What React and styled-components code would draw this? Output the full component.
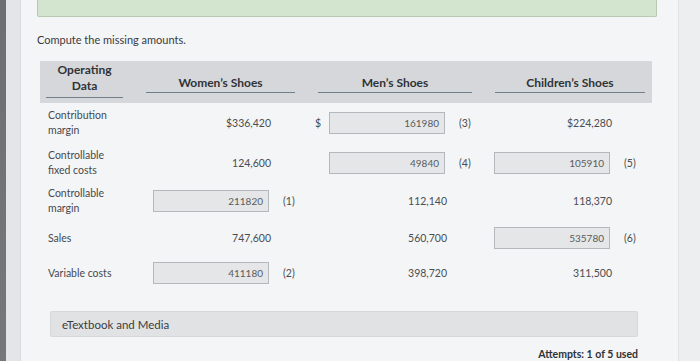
import React from "react";
import styled, { createGlobalStyle } from "styled-components";

const Global = createGlobalStyle`
  html, body { margin: 0; padding: 0; background: #eceef0; }
  body { font-family: Lato, "Open Sans", "Liberation Sans", sans-serif; }
`;

const Screen = styled.div`
  width: 700px;
  height: 361px;
  display: flex;
  overflow: hidden;
  background: #eceef0;
`;

const Bezel = styled.div`
  width: 6px;
  flex: none;
  background: linear-gradient(#6c6e72, #75777b);
`;

const Gutter = styled.div`
  width: 14px;
  flex: none;
  background: #e3e5e7;
  border-right: 1px solid #d9dbde;
`;

const Panel = styled.div`
  width: 658px;
  flex: none;
  background: #f4f5f6;
  padding-left: 16px;
  box-sizing: border-box;
  display: flex;
  flex-direction: column;
  border-right: 1px solid #dfe1e3;
`;

const Banner = styled.div`
  width: 618px;
  height: 16px;
  flex: none;
  background: #d3e5cf;
  border: 1px solid #b7c9b3;
  border-top: none;
  border-radius: 0 0 2px 2px;
`;

const Prompt = styled.p`
  margin: 16px 0 0 0;
  font-size: 11px;
  line-height: 14px;
  color: #383b3e;
`;

const Table = styled.div`
  margin: 14px 0 0 3px;
  width: 612px;
  display: flex;
  flex-direction: column;
`;

const HeaderBand = styled.div`
  height: 42px;
  box-sizing: border-box;
  background: #d5d7da;
  display: grid;
  grid-template-columns: 77px 149px 154px 150px;
  column-gap: 23px;
  align-items: end;
  padding: 0 0 5px 6px;
`;

const StubTitle = styled.div`
  font-weight: 700;
  font-size: 12px;
  line-height: 16px;
  color: #303336;
  text-align: center;
  padding-bottom: 3px;
  border-bottom: 1px solid #6f7f8c;
`;

const ColTitle = styled(StubTitle)`
  margin-bottom: 5px;
  padding-bottom: 1px;
`;

const Row = styled.div`
  height: ${(p) => p.$h}px;
  display: grid;
  grid-template-columns: 99px 176px 165px 172px;
  align-items: center;
`;

const RowLabel = styled.div`
  padding-left: 8px;
  font-size: 10.5px;
  line-height: 15px;
  color: #46494c;
`;

const Cell = styled.div`
  display: flex;
  align-items: center;
`;

const Prefix = styled.span`
  width: 14px;
  flex: none;
  font-size: 10.5px;
  color: #46494c;
`;

const Value = styled.span`
  width: 118px;
  flex: none;
  text-align: right;
  font-size: 10.5px;
  color: #4a4d51;
`;

const Box = styled.div`
  width: 116px;
  height: 22px;
  flex: none;
  box-sizing: border-box;
  background: #e5e6e7;
  border: 1px solid #b5b8bb;
  font-size: 10px;
  line-height: 20px;
  text-align: right;
  padding-right: 5px;
  color: #595c60;
`;

const Suffix = styled.span`
  margin-left: 14px;
  font-size: 10.5px;
  color: #4a4d51;
`;

const MediaBar = styled.div`
  margin: 21px 0 0 13px;
  width: 588px;
  height: 26px;
  box-sizing: border-box;
  background: #e1e2e4;
  border: 1px solid #d6d8da;
  border-radius: 2px;
  padding-left: 11px;
  display: flex;
  align-items: center;
  font-size: 11.5px;
  color: #3a3d40;
`;

const Attempts = styled.div`
  margin: 11px 0 0 0;
  width: 601px;
  text-align: right;
  font-size: 10.5px;
  font-weight: 700;
  line-height: 12px;
  color: #2f3235;
`;

const cols = [{ key: "w" }, { key: "m" }, { key: "c" }];

const rows = [
  {
    label: ["Contribution", "margin"],
    h: 40,
    w: { text: "$336,420" },
    m: { prefix: "$", box: "161980", n: "(3)" },
    c: { text: "$224,280" },
  },
  {
    label: ["Controllable", "fixed costs"],
    h: 39,
    w: { text: "124,600" },
    m: { box: "49840", n: "(4)" },
    c: { box: "105910", n: "(5)" },
  },
  {
    label: ["Controllable", "margin"],
    h: 38,
    w: { box: "211820", n: "(1)" },
    m: { text: "112,140" },
    c: { text: "118,370" },
  },
  {
    label: ["Sales"],
    h: 36,
    w: { text: "747,600" },
    m: { text: "560,700" },
    c: { box: "535780", n: "(6)" },
  },
  {
    label: ["Variable costs"],
    h: 34,
    w: { box: "411180", n: "(2)" },
    m: { text: "398,720" },
    c: { text: "311,500" },
  },
];

function DataCell({ d }) {
  return (
    <Cell>
      <Prefix>{d.prefix || ""}</Prefix>
      {d.box ? <Box>{d.box}</Box> : <Value>{d.text}</Value>}
      {d.n && <Suffix>{d.n}</Suffix>}
    </Cell>
  );
}

export default function App() {
  return (
    <>
      <Global />
      <Screen>
        <Bezel />
        <Gutter />
        <Panel>
          <Banner />
          <Prompt>Compute the missing amounts.</Prompt>
          <Table>
            <HeaderBand>
              <StubTitle>
                Operating
                <br />
                Data
              </StubTitle>
              <ColTitle>Women’s Shoes</ColTitle>
              <ColTitle>Men’s Shoes</ColTitle>
              <ColTitle>Children’s Shoes</ColTitle>
            </HeaderBand>
            {rows.map((r, i) => (
              <Row key={i} $h={r.h}>
                <RowLabel>
                  {r.label.map((l, j) => (
                    <div key={j}>{l}</div>
                  ))}
                </RowLabel>
                {cols.map((c) => (
                  <DataCell key={c.key} d={r[c.key]} />
                ))}
              </Row>
            ))}
          </Table>
          <MediaBar>eTextbook and Media</MediaBar>
          <Attempts>Attempts: 1 of 5 used</Attempts>
        </Panel>
      </Screen>
    </>
  );
}
